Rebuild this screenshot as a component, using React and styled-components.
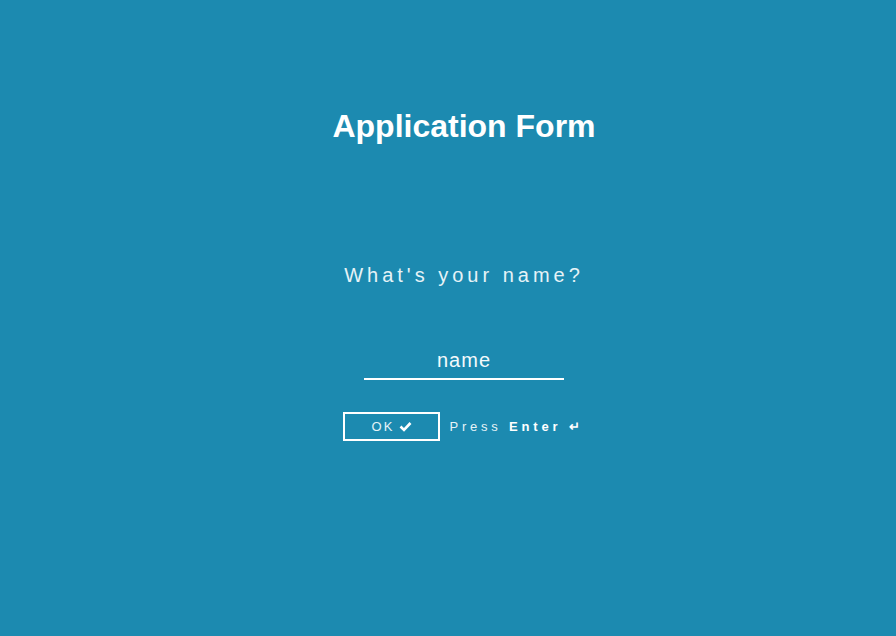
import React from "react";
import styled, { createGlobalStyle } from "styled-components";

const GlobalStyle = createGlobalStyle`
  html, body {
    margin: 0;
    padding: 0;
    background: #1c8ab0;
    font-family: "Liberation Sans", Arial, sans-serif;
  }
`;

const Page = styled.main`
  min-height: 636px;
  box-sizing: border-box;
  padding: 107px 0 0 32px;
  display: flex;
  flex-direction: column;
  align-items: center;
  color: #fff;
`;

const Title = styled.h1`
  margin: 0;
  font-size: 32px;
  font-weight: 700;
  line-height: 38px;
`;

const Question = styled.h2`
  margin: 118px 0 0;
  font-size: 20px;
  font-weight: 400;
  letter-spacing: 4px;
  line-height: 24px;
  color: #e6f3f7;
`;

const Field = styled.input`
  margin-top: 61px;
  width: 200px;
  box-sizing: border-box;
  background: transparent;
  border: none;
  border-bottom: 2px solid #fff;
  outline: none;
  color: #f4fafc;
  font-family: inherit;
  font-size: 20px;
  letter-spacing: 1px;
  text-align: center;
  padding: 0 0 6px;
  line-height: 24px;
  &::placeholder {
    color: #f4fafc;
    opacity: 1;
  }
`;

const Actions = styled.div`
  margin-top: 32px;
  display: flex;
  align-items: center;
  gap: 9px;
  margin-left: -1px;
`;

const OkButton = styled.button`
  width: 97px;
  height: 29px;
  box-sizing: border-box;
  border: 2px solid #fff;
  background: transparent;
  color: #e6f3f7;
  font-family: inherit;
  font-size: 13px;
  letter-spacing: 2px;
  display: flex;
  align-items: center;
  justify-content: center;
  gap: 5px;
  cursor: pointer;
  padding: 0;
`;

const Hint = styled.span`
  font-size: 13px;
  letter-spacing: 3.8px;
  color: #e6f3f7;
  b {
    color: #fff;
    font-weight: 700;
  }
`;

const Check = () => (
  <svg width="13" height="11" viewBox="0 0 13 11">
    <path d="M1.5 5.5 L5 9 L11.5 2" fill="none" stroke="#fff" strokeWidth="2.6" />
  </svg>
);

export default function App() {
  return (
    <>
      <GlobalStyle />
      <Page>
        <Title>Application Form</Title>
        <Question>What's your name?</Question>
        <Field type="text" placeholder="name" />
        <Actions>
          <OkButton>
            OK <Check />
          </OkButton>
          <Hint>
            Press <b>Enter</b> <b>↵</b>
          </Hint>
        </Actions>
      </Page>
    </>
  );
}
